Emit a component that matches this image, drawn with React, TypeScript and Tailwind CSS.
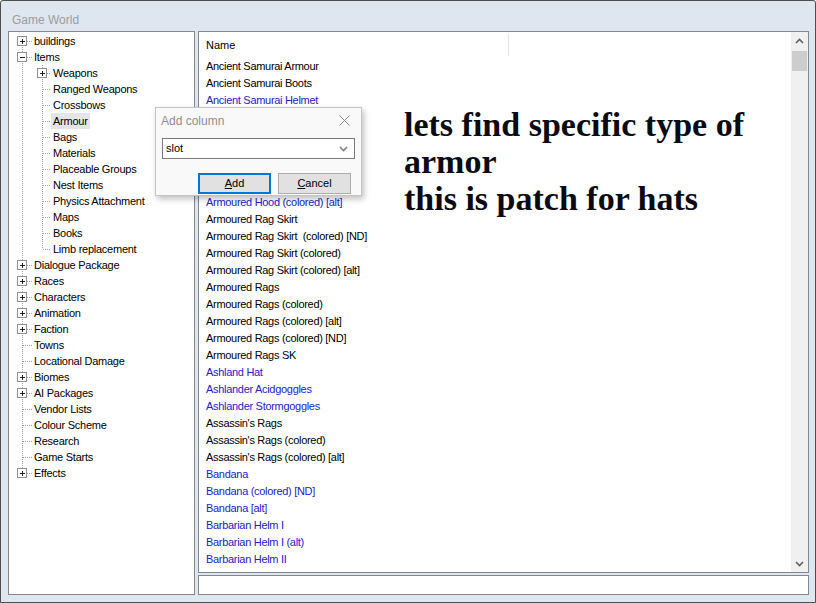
import React from "react";

type TreeNode = {
  label: string;
  level: 0 | 1;
  box?: "plus" | "minus";
  selected?: boolean;
};

const tree: TreeNode[] = [
  { label: "buildings", level: 0, box: "plus" },
  { label: "Items", level: 0, box: "minus" },
  { label: "Weapons", level: 1, box: "plus" },
  { label: "Ranged Weapons", level: 1 },
  { label: "Crossbows", level: 1 },
  { label: "Armour", level: 1, selected: true },
  { label: "Bags", level: 1 },
  { label: "Materials", level: 1 },
  { label: "Placeable Groups", level: 1 },
  { label: "Nest Items", level: 1 },
  { label: "Physics Attachment", level: 1 },
  { label: "Maps", level: 1 },
  { label: "Books", level: 1 },
  { label: "Limb replacement", level: 1 },
  { label: "Dialogue Package", level: 0, box: "plus" },
  { label: "Races", level: 0, box: "plus" },
  { label: "Characters", level: 0, box: "plus" },
  { label: "Animation", level: 0, box: "plus" },
  { label: "Faction", level: 0, box: "plus" },
  { label: "Towns", level: 0 },
  { label: "Locational Damage", level: 0 },
  { label: "Biomes", level: 0, box: "plus" },
  { label: "AI Packages", level: 0, box: "plus" },
  { label: "Vendor Lists", level: 0 },
  { label: "Colour Scheme", level: 0 },
  { label: "Research", level: 0 },
  { label: "Game Starts", level: 0 },
  { label: "Effects", level: 0, box: "plus" },
];

// true = blue (item goes in the hat slot)
const items: [string, boolean][] = [
  ["Ancient Samurai Armour", false],
  ["Ancient Samurai Boots", false],
  ["Ancient Samurai Helmet", true],
  ["Armoured Hood", true],
  ["Armoured Hood (colored)", true],
  ["Armoured Hood (colored) [ND]", true],
  ["Armoured Hood [alt]", true],
  ["Armoured Hood [ND]", true],
  ["Armoured Hood (colored) [alt]", true],
  ["Armoured Rag Skirt", false],
  ["Armoured Rag Skirt  (colored) [ND]", false],
  ["Armoured Rag Skirt (colored)", false],
  ["Armoured Rag Skirt (colored) [alt]", false],
  ["Armoured Rags", false],
  ["Armoured Rags (colored)", false],
  ["Armoured Rags (colored) [alt]", false],
  ["Armoured Rags (colored) [ND]", false],
  ["Armoured Rags SK", false],
  ["Ashland Hat", true],
  ["Ashlander Acidgoggles", true],
  ["Ashlander Stormgoggles", true],
  ["Assassin's Rags", false],
  ["Assassin's Rags (colored)", false],
  ["Assassin's Rags (colored) [alt]", false],
  ["Bandana", true],
  ["Bandana (colored) [ND]", true],
  ["Bandana [alt]", true],
  ["Barbarian Helm I", true],
  ["Barbarian Helm I (alt)", true],
  ["Barbarian Helm II", true],
  ["Barbarian Helm II (alt)", true],
];

function Expander({ x, kind }: { x: number; kind: "plus" | "minus" }) {
  return (
    <g shapeRendering="crispEdges">
      <rect x={x - 4.5} y={3.5} width={9} height={9} fill="#fff" stroke="#919191" />
      <line x1={x - 2} y1={8} x2={x + 3} y2={8} stroke="#222" />
      {kind === "plus" && <line x1={x + 0.5} y1={5.5} x2={x + 0.5} y2={10.5} stroke="#222" />}
    </g>
  );
}

function TreeRow({ node, index }: { node: TreeNode; index: number }) {
  const first = index === 0;
  const last = index === tree.length - 1;
  const w = node.level === 0 ? 23 : 42;
  const childLast = node.level === 1 && tree[index + 1]?.level !== 1;
  const dot = { stroke: "#a0a0a0", strokeDasharray: "1 1" };
  return (
    <div className="flex h-4 items-center">
      <svg width={w} height={16} className="shrink-0">
        <g shapeRendering="crispEdges">
          <line x1={13.5} y1={first ? 8 : 0} x2={13.5} y2={last ? 8 : 16} {...dot} />
          {node.level === 0 && <line x1={14} y1={8.5} x2={23} y2={8.5} {...dot} />}
          {node.level === 1 && (
            <>
              <line x1={33.5} y1={0} x2={33.5} y2={childLast ? 8 : 16} {...dot} />
              <line x1={34} y1={8.5} x2={42} y2={8.5} {...dot} />
            </>
          )}
        </g>
        {node.box && <Expander x={node.level === 0 ? 13 : 33} kind={node.box} />}
      </svg>
      <span
        className={`px-[2px] leading-4 whitespace-nowrap ${node.selected ? "bg-[#e5e5e5]" : ""}`}
      >
        {node.label}
      </span>
    </div>
  );
}

function Chevron({ up, className }: { up?: boolean; className?: string }) {
  return (
    <svg width="9" height="6" viewBox="0 0 9 6" className={className}>
      <path
        d={up ? "M1 5 L4.5 1.5 L8 5" : "M1 1 L4.5 4.5 L8 1"}
        fill="none"
        stroke="#606060"
        strokeWidth="1.6"
      />
    </svg>
  );
}

export default function App() {
  return (
    <div
      className="relative flex h-[603px] w-[816px] flex-col overflow-hidden rounded-t-[3px] border border-[#4d4d4d] bg-[#dee6ef] text-[11px] text-black"
      style={{ fontFamily: '"Liberation Sans", Arial, sans-serif' }}
    >
      <div className="flex h-[30px] shrink-0 items-center pl-[11px] pt-[8px] text-[12px] text-[#9c9c9c]">
        Game World
      </div>

      <div className="flex min-h-0 flex-1 gap-[3px] pb-[7px] pl-[7px] pr-[6px]">
        {/* tree */}
        <div className="w-[187px] shrink-0 overflow-hidden border border-[#828790] bg-white pt-[1px] tracking-[-0.25px]">
          {tree.map((n, i) => (
            <TreeRow key={n.label} node={n} index={i} />
          ))}
        </div>

        {/* list + text box */}
        <div className="flex min-w-0 flex-1 flex-col gap-[2px]">
          <div className="flex min-h-0 flex-1 border border-[#828790] bg-white">
            <div className="flex min-w-0 flex-1 flex-col overflow-hidden">
              <div className="flex h-[26px] shrink-0 items-center">
                <div className="flex h-[22px] w-[310px] items-center border-r border-[#e5e5e5] pl-[7px]">
                  Name
                </div>
              </div>
              <div className="min-h-0 flex-1 overflow-hidden tracking-[-0.3px]">
                {items.map(([name, blue]) => (
                  <div
                    key={name}
                    className={`h-[17px] pl-[7px] leading-[17px] whitespace-pre ${blue ? "text-[#2323c4]" : ""}`}
                  >
                    {name}
                  </div>
                ))}
              </div>
            </div>
            {/* scrollbar */}
            <div className="flex w-[17px] shrink-0 flex-col bg-[#f0f0f0]">
              <div className="flex h-[17px] items-center justify-center">
                <Chevron up />
              </div>
              <div className="mx-[1px] mt-[2px] h-[20px] bg-[#cdcdcd]" />
              <div className="flex-1" />
              <div className="flex h-[17px] items-center justify-center">
                <Chevron />
              </div>
            </div>
          </div>
          <div className="h-[20px] shrink-0 border border-[#828790] bg-white" />
        </div>
      </div>

      {/* Add column dialog */}
      <div className="absolute left-[154px] top-[106px] flex h-[89px] w-[207px] flex-col border border-[#c4c4c4] bg-[#f9f9f9] shadow-[2px_3px_6px_rgba(0,0,0,0.25)]">
        <div className="flex h-[24px] items-center justify-between pl-[5px] pr-[11px] pt-[1px] text-[12px] text-[#8f8f8f]">
          <span>Add column</span>
          <svg width="11" height="11" viewBox="0 0 11 11">
            <path d="M0.5 0.5 L10.5 10.5 M10.5 0.5 L0.5 10.5" stroke="#8a8a8a" strokeWidth="1" />
          </svg>
        </div>
        <div className="mx-[6px] mt-[6px] flex h-[21px] items-center justify-between border border-[#7a7a7a] bg-white pl-[3px] pr-[6px]">
          <span>slot</span>
          <Chevron className="opacity-80" />
        </div>
        <div className="mt-[14px] flex justify-end gap-[7px] pr-[10px]">
          <button className="h-[21px] w-[73px] border border-[#0078d7] bg-[#e1e1e1] shadow-[inset_0_0_0_1px_#0078d7]">
            <span className="underline">A</span>dd
          </button>
          <button className="h-[21px] w-[73px] border border-[#adadad] bg-[#e1e1e1]">
            <span className="underline">C</span>ancel
          </button>
        </div>
      </div>

      {/* annotation */}
      <div
        className="absolute left-[403px] top-[105px] text-[34px] font-bold leading-[37px] text-[#0a0a14]"
        style={{ fontFamily: '"Liberation Serif", "Times New Roman", serif' }}
      >
        lets find specific type of
        <br />
        armor
        <br />
        this is patch for hats
      </div>
    </div>
  );
}
